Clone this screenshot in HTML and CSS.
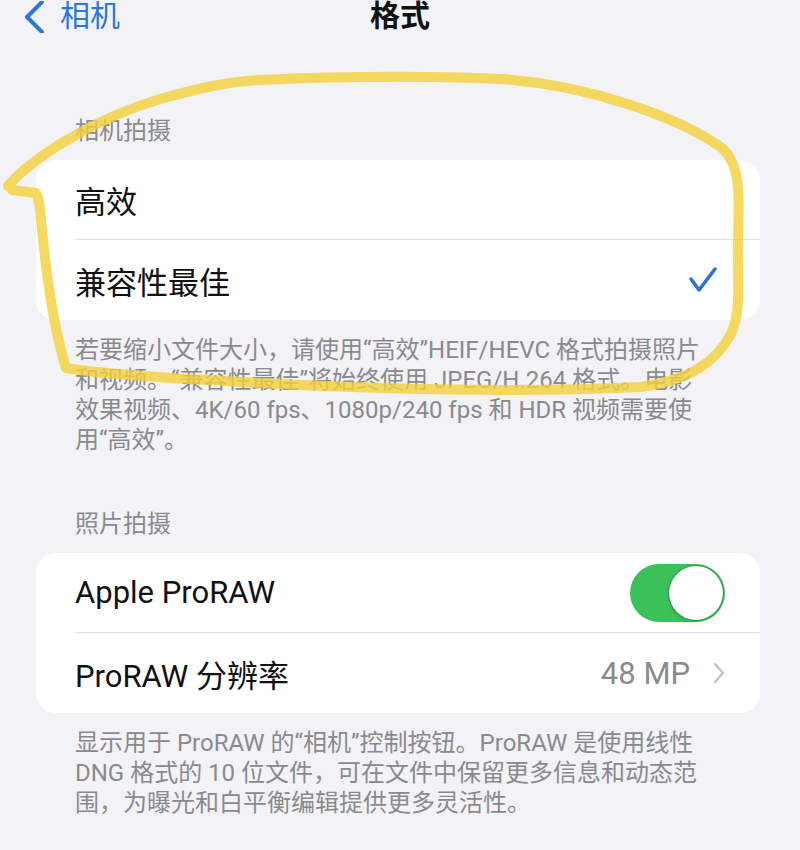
FILE: index.html
```html
<!DOCTYPE html>
<html lang="zh-CN">
<head>
	<meta charset="UTF-8">
	<title>格式</title>
	<link rel="stylesheet" href="styles.css">
</head>
<body>
	<div class="screen">
		<header class="nav">
			<a class="back">
				<svg class="back-chev" viewBox="0 0 24 32"><path d="M20 1 L5 16 L20 31"/></svg>
				<span>相机</span>
			</a>
			<h1 class="title">格式</h1>
			<span></span>
		</header>

		<section class="group group-first">
			<h2 class="group-title">相机拍摄</h2>
			<div class="card">
				<div class="row">
					<div class="row-body"><span class="label">高效</span></div>
				</div>
				<div class="row">
					<div class="row-body">
						<span class="label">兼容性最佳</span>
						<svg class="check" viewBox="0 0 28 26"><path d="M2 12 L10 23 L26 2"/></svg>
					</div>
				</div>
			</div>
			<p class="note">若要缩小文件大小，请使用“高效”HEIF/HEVC 格式拍摄照片<br>和视频。“兼容性最佳”将始终使用 JPEG/H.264 格式。电影<br>效果视频、4K/60 fps、1080p/240 fps 和 HDR 视频需要使<br>用“高效”。</p>
		</section>

		<section class="group">
			<h2 class="group-title">照片拍摄</h2>
			<div class="card">
				<div class="row">
					<div class="row-body">
						<span class="label">Apple ProRAW</span>
						<span class="toggle on"><span class="knob"></span></span>
					</div>
				</div>
				<div class="row">
					<div class="row-body">
						<span class="label">ProRAW 分辨率</span>
						<span class="value">48 MP
							<svg class="chev" viewBox="0 0 12 22"><path d="M2 2 L10 11 L2 20"/></svg>
						</span>
					</div>
				</div>
			</div>
			<p class="note">显示用于 ProRAW 的“相机”控制按钮。ProRAW 是使用线性<br>DNG 格式的 10 位文件，可在文件中保留更多信息和动态范<br>围，为曝光和白平衡编辑提供更多灵活性。</p>
		</section>

		<!-- hand drawn marker circle over the first group -->
		<svg class="scribble" viewBox="0 0 800 850">
			<path d="M8 186 C30 160, 90 120, 160 99 C200 88, 230 81, 260 80 C350 76, 430 76, 500 79 C590 85, 680 118, 722 148 C742 166, 739 200, 738 240 C737 280, 742 310, 731 334 C716 362, 690 380, 640 387 C520 393, 380 389, 260 383 C170 378, 110 375, 66 368 C54 330, 46 270, 42 230 C40 210, 40 200, 36 193 L12 190"/>
		</svg>
	</div>
</body>
</html>
```

FILE: styles.css
```css
*{margin: 0;padding: 0;box-sizing: border-box;}
body{
	background: #f2f2f7;
	font-family: Roboto, "Noto Sans CJK SC", sans-serif;
	color: #111;
}
.screen{
	position: relative;
	width: 800px;
	height: 850px;
	overflow: hidden;
}
/* the page is scrolled a little, so the bar sits slightly above the top */
.nav{
	display: grid;
	grid-template-columns: 1fr auto 1fr;
	align-items: center;
	height: 28px;
	margin-top: -2px;
}
.back{
	display: flex;
	align-items: center;
	gap: 14px;
	padding-left: 22px;
	color: #2a77dd;
	font-size: 30px;
	line-height: 30px;
}
.back-chev{
	width: 24px;
	height: 32px;
	margin-top: 3px;
}
.back-chev path{
	fill: none;
	stroke: #2a77dd;
	stroke-width: 4;
	stroke-linecap: round;
	stroke-linejoin: round;
}
.title{
	font-size: 30px;
	line-height: 30px;
	font-weight: 700;
}
.group{
	margin-top: 54px;
}
.group-first{
	margin-top: 90px;
}
.group-title{
	padding-left: 75px;
	font-size: 24px;
	line-height: 30px;
	font-weight: 400;
	color: #8a8a8e;
	margin-bottom: 14px;
}
.card{
	margin: 0 40px 0 36px;
	background: #fff;
	border-radius: 20px;
	overflow: hidden;
}
.row{
	padding-left: 39px;
}
.row-body{
	display: flex;
	align-items: center;
	justify-content: space-between;
	height: 80px;
	padding-right: 35px;
	border-bottom: 1px solid #e0e0e4;
}
.row:last-child .row-body{
	border-bottom: none;
}
.label{
	font-size: 31px;
}
.check{
	width: 28px;
	height: 26px;
	margin-right: 8px;
}
.check path{
	fill: none;
	stroke: #2873d8;
	stroke-width: 3.5;
	stroke-linecap: round;
	stroke-linejoin: round;
}
.toggle{
	position: relative;
	width: 95px;
	height: 58px;
	border-radius: 29px;
	background: #e5e5ea;
}
.toggle.on{
	background: #3ac259;
}
.knob{
	position: absolute;
	top: 2px;
	right: 2px;
	width: 54px;
	height: 54px;
	border-radius: 50%;
	background: #fff;
	box-shadow: 0 0 0 1px rgba(20, 90, 30, .35), 0 2px 4px rgba(0, 0, 0, .12);
}
.value{
	display: flex;
	align-items: center;
	gap: 23px;
	font-size: 31px;
	color: #8a8a8e;
}
.chev{
	width: 12px;
	height: 22px;
}
.chev path{
	fill: none;
	stroke: #c4c4c7;
	stroke-width: 2.5;
	stroke-linecap: round;
	stroke-linejoin: round;
}
.note{
	margin-top: 15px;
	padding-left: 75px;
	font-size: 24px;
	line-height: 30px;
	color: #8a8a8e;
	white-space: nowrap;
}
.scribble{
	position: absolute;
	top: 0;
	left: 0;
	width: 800px;
	height: 850px;
	pointer-events: none;
}
.scribble path{
	fill: none;
	stroke: #f2cf38;
	stroke-opacity: .8;
	stroke-width: 10;
	stroke-linecap: round;
	stroke-linejoin: round;
}
```
